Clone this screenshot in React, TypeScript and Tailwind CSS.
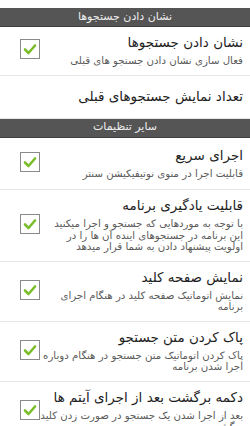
const font = { fontFamily: '"DejaVu Sans", "Noto Sans", sans-serif' }

type Item = { title: string; sub?: string; checked?: boolean; pad?: string }

function SectionHeader({ label }: { label: string }) {
  return (
    <div className="h-[19px] bg-[#555555] border-b border-[#3f3f3f] flex items-center justify-center text-[11px] text-[#eeeeee]">
      {label}
    </div>
  )
}

function CheckBox() {
  return (
    <div className="w-[20px] h-[20px] shrink-0 border border-[#8a8a8a] bg-white flex items-center justify-center">
      <svg width="14" height="12" viewBox="0 0 14 12">
        <path d="M2 6.5 L5.5 10 L12 2.5" fill="none" stroke="#7cbd2b" strokeWidth="2.6" strokeLinecap="round" strokeLinejoin="round" />
      </svg>
    </div>
  )
}

function Row({ item }: { item: Item }) {
  return (
    <div className={`flex items-center border-b border-[#e6e6e6] pr-[7px] pl-[10px] ${item.pad ?? 'pt-[5px] pb-[8px]'}`}>
      <div className="flex-1 min-w-0 text-right">
        <div className="text-[13.5px] leading-[20px] text-[#1e1e1e]">{item.title}</div>
        {item.sub && (
          <div className="mt-[3px] text-[10.2px] leading-[11.5px] text-[#5a5a5a]">{item.sub}</div>
        )}
      </div>
      {item.checked !== false && (
        <div className="w-[30px] shrink-0 flex justify-start">
          <CheckBox />
        </div>
      )}
    </div>
  )
}

const searchItems: Item[] = [
  { title: 'نشان دادن جستجوها', sub: 'فعال سازی نشان دادن جستجو های قبلی' },
  { title: 'تعداد نمایش جستجوهای قبلی', checked: false, pad: 'pt-[10px] pb-[12px]' },
]

const otherItems: Item[] = [
  { title: 'اجرای سریع', sub: 'قابلیت اجرا در منوی نوتیفیکیشن سنتر', pad: 'pt-[7px] pb-[10px]' },
  {
    title: 'قابلیت یادگیری برنامه',
    sub: 'با توجه به موردهایی که جستجو و اجرا میکنید این برنامه در جستجوهای اینده آن ها را در اولویت پیشنهاد دادن به شما قرار میدهد',
  },
  { title: 'نمایش صفحه کلید', sub: 'نمایش اتوماتیک صفحه کلید در هنگام اجرای برنامه' },
  { title: 'پاک کردن متن جستجو', sub: 'پاک کردن اتوماتیک متن جستجو در هنگام دوباره اجرا شدن برنامه' },
  { title: 'دکمه برگشت بعد از اجرای آیتم ها', sub: 'بعد از اجرا شدن یک جستجو در صورت زدن کلید برگشت' },
]

export default function App() {
  return (
    <div dir="rtl" className="w-[250px] h-[426px] overflow-hidden bg-white pt-[8px]" style={font}>
      <SectionHeader label="نشان دادن جستجوها" />
      {searchItems.map((it) => (
        <Row key={it.title} item={it} />
      ))}
      <SectionHeader label="سایر تنظیمات" />
      {otherItems.map((it) => (
        <Row key={it.title} item={it} />
      ))}
    </div>
  )
}
